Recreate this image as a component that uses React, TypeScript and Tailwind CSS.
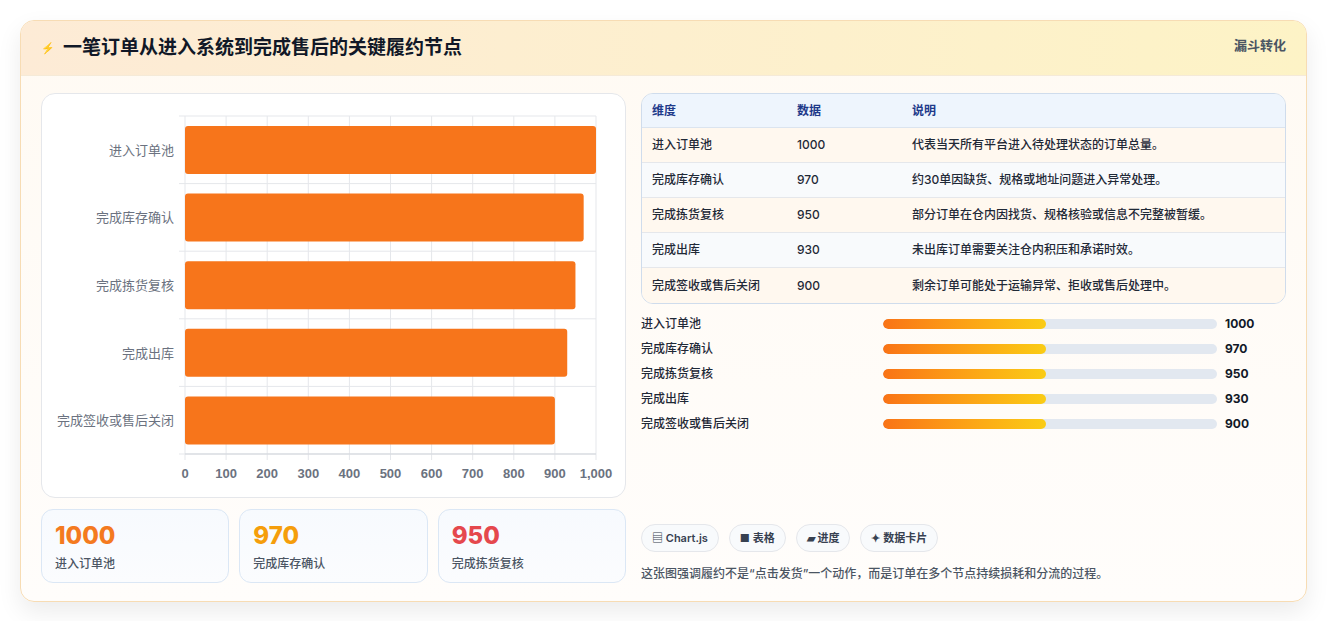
import React from "react";

const rows = [
  { n: "进入订单池", v: 1000, d: "代表当天所有平台进入待处理状态的订单总量。" },
  { n: "完成库存确认", v: 970, d: "约30单因缺货、规格或地址问题进入异常处理。" },
  { n: "完成拣货复核", v: 950, d: "部分订单在仓内因找货、规格核验或信息不完整被暂缓。" },
  { n: "完成出库", v: 930, d: "未出库订单需要关注仓内积压和承诺时效。" },
  { n: "完成签收或售后关闭", v: 900, d: "剩余订单可能处于运输异常、拒收或售后处理中。" },
];

function Chart() {
  const x0 = 143, x1 = 554, top = 22, bottom = 360;
  const step = (bottom - top) / 5;
  const sx = (v: number) => x0 + ((x1 - x0) * v) / 1000;
  return (
    <svg width="585" height="403" className="block">
      {Array.from({ length: 11 }).map((_, i) => (
        <line key={i} x1={sx(i * 100)} x2={sx(i * 100)} y1={top} y2={bottom + 6} stroke="#e5e7eb" />
      ))}
      {Array.from({ length: 6 }).map((_, i) => (
        <line key={i} x1={x0 - 6} x2={x1} y1={top + i * step} y2={top + i * step} stroke="#e5e7eb" />
      ))}
      <line x1={x0} x2={x1} y1={bottom} y2={bottom} stroke="#d1d5db" />
      {rows.map((r, i) => (
        <g key={i}>
          <rect x={x0} y={top + i * step + 10} width={sx(r.v) - x0} height={48} rx={3} fill="#f7751b" />
          <text x={x0 - 11} y={top + i * step + step / 2 + 5} textAnchor="end" fontSize="13" fill="#6b7280" fontFamily="Inter, 'Noto Sans CJK SC', sans-serif">{r.n}</text>
        </g>
      ))}
      {Array.from({ length: 11 }).map((_, i) => (
        <text key={i} x={sx(i * 100)} y={bottom + 24} textAnchor="middle" fontSize="13" fill="#6b7280" fontFamily="'Liberation Sans', Arial, sans-serif" fontWeight="600">{i === 10 ? "1,000" : i * 100}</text>
      ))}
    </svg>
  );
}

export default function App() {
  return (
    <div className="min-h-[621px] bg-white pt-5 px-5 pb-5" style={{ fontFamily: "Inter, 'Noto Sans CJK SC', sans-serif" }}>
      <div className="rounded-[14px] border border-[#f7dcb4] bg-gradient-to-b from-[#fffaf3] to-[#fffdfb] shadow-[0_10px_25px_rgba(0,0,0,0.08)] overflow-hidden">
        <div className="h-[55px] flex items-center justify-between px-5 bg-gradient-to-r from-[#fdebd6] to-[#fdf3c6] border-b border-[#f5ead8]">
          <div className="flex items-center gap-2">
            <span className="text-[#3b5bdb] text-[11px]">⚡</span>
            <span className="text-[19px] font-bold text-[#111827]">一笔订单从进入系统到完成售后的关键履约节点</span>
          </div>
          <span className="text-[13px] font-semibold text-[#4b5563] self-start mt-[15px]">漏斗转化</span>
        </div>
        <div className="flex gap-[15px] px-5 pt-[17px] pb-[18px]">
          <div className="w-[585px] flex flex-col gap-[11px]">
            <div className="rounded-[14px] border border-[#e5e7eb] bg-white">
              <Chart />
            </div>
            <div className="grid grid-cols-3 gap-[10px]">
              {[
                ["1000", "进入订单池", "text-[#f47a1f]"],
                ["970", "完成库存确认", "text-[#f59e0b]"],
                ["950", "完成拣货复核", "text-[#e5484d]"],
              ].map(([v, l, c]) => (
                <div key={v} className="h-[74px] rounded-[12px] border border-[#dbe7f5] bg-gradient-to-b from-[#f7fafe] to-[#fbfcfe] px-[13px] pt-[12px]">
                  <div className={`text-[24px] leading-[28px] font-extrabold ${c}`}>{v}</div>
                  <div className="text-[12px] text-[#4b5563] font-medium mt-[5px]">{l}</div>
                </div>
              ))}
            </div>
          </div>
          <div className="flex-1 flex flex-col">
            <div className="rounded-[12px] border border-[#cfdcec] overflow-hidden text-[12px]">
              <div className="flex h-[34px] items-center bg-[#eef5fd] border-b border-[#dbe4ef] text-[#1e3a8a] font-semibold">
                <div className="w-[155px] pl-[10px]">维度</div>
                <div className="w-[115px]">数据</div>
                <div>说明</div>
              </div>
              {rows.map((r, i) => (
                <div key={i} className={`flex h-[35px] items-center text-[#1f2937] font-medium ${i % 2 ? "bg-[#f8fafc]" : "bg-[#fff8ef]"} ${i < 4 ? "border-b border-[#e5e7eb]" : ""}`}>
                  <div className="w-[155px] pl-[10px]">{r.n}</div>
                  <div className="w-[115px]">{r.v}</div>
                  <div>{r.d}</div>
                </div>
              ))}
            </div>
            <div className="mt-[12px] flex flex-col gap-[9px]">
              {rows.map((r, i) => (
                <div key={i} className="flex items-center h-[16px] text-[12px]">
                  <div className="w-[242px] text-[#1f2937] font-medium">{r.n}</div>
                  <div className="w-[334px] h-[10px] rounded-full bg-[#e2e8f0] overflow-hidden">
                    <div className="w-[163px] h-full rounded-full bg-gradient-to-r from-[#f97316] to-[#facc15]" />
                  </div>
                  <div className="ml-[8px] font-bold text-[#111827]">{r.v}</div>
                </div>
              ))}
            </div>
            <div className="flex-1" />
            <div className="flex gap-[10px] text-[11px] font-semibold text-[#374151]">
              <span className="h-[28px] px-[10px] rounded-full border border-[#e5e7eb] bg-[#f8fafc] flex items-center">▤ Chart.js</span>
              <span className="h-[28px] px-[10px] rounded-full border border-[#e5e7eb] bg-[#f8fafc] flex items-center">■ 表格</span>
              <span className="h-[28px] px-[10px] rounded-full border border-[#e5e7eb] bg-[#f8fafc] flex items-center">▰ 进度</span>
              <span className="h-[28px] px-[10px] rounded-full border border-[#e5e7eb] bg-[#f8fafc] flex items-center">✦ 数据卡片</span>
            </div>
            <div className="mt-[13px] text-[12px] text-[#4b5563] font-medium">这张图强调履约不是“点击发货”一个动作，而是订单在多个节点持续损耗和分流的过程。</div>
          </div>
        </div>
      </div>
    </div>
  );
}
